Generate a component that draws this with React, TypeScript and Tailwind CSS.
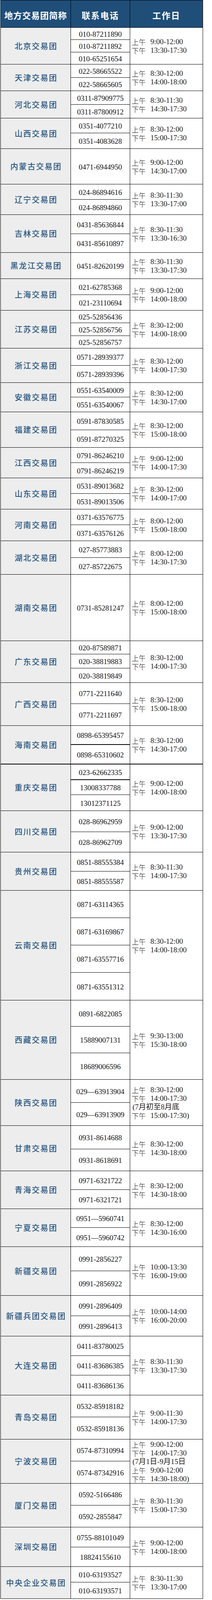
import * as React from "react";

type Group = {
  name: string;
  phones: string[];
  heights: number[];
  hours: string[];
  thickSplit?: number;
  thickBottom?: boolean;
};

const K = 4096 / 4570;
const HEADER = 79;

const std = (am: string, pm: string) => [`上午 ${am}`, `下午 ${pm}`];

const groups: Group[] = [
  { name: "北京交易团", phones: ["010-87211890", "010-87211892", "010-65251654"], heights: [35, 35, 35], hours: std("9:00-12:00", "13:30-17:30") },
  { name: "天津交易团", phones: ["022-58665522", "022-58665605"], heights: [38, 38], hours: std("8:30-12:00", "14:00-18:00") },
  { name: "河北交易团", phones: ["0311-87909775", "0311-87800912"], heights: [39, 39], hours: std("8:30-11:30", "14:30-17:30") },
  { name: "山西交易团", phones: ["0351-4077210", "0351-4083628"], heights: [43, 44], hours: std("8:30-12:00", "15:00-17:30") },
  { name: "内蒙古交易团", phones: ["0471-6944950"], heights: [102], hours: std("9:00-12:00", "14:30-17:00") },
  { name: "辽宁交易团", phones: ["024-86894616", "024-86894860"], heights: [43, 44], hours: std("8:30-11:30", "13:30-17:00") },
  { name: "吉林交易团", phones: ["0431-85636844", "0431-85610897"], heights: [54, 54], hours: std("8:30-11:30", "13:30-16:30") },
  { name: "黑龙江交易团", phones: ["0451-82620199"], heights: [75], hours: std("8:30-11:30", "13:30-17:30") },
  { name: "上海交易团", phones: ["021-62785368", "021-23110694"], heights: [45, 45], hours: std("9:00-12:00", "14:00-18:00") },
  { name: "江苏交易团", phones: ["025-52856436", "025-52856756", "025-52856757"], heights: [36, 36, 36], hours: std("8:30-12:00", "14:00-18:00") },
  { name: "浙江交易团", phones: ["0571-28939377", "0571-28939396"], heights: [49, 49], hours: std("8:30-12:00", "14:00-17:30") },
  { name: "安徽交易团", phones: ["0551-63540009", "0551-63540067"], heights: [42, 42], hours: std("8:30-12:00", "14:30-17:00") },
  { name: "福建交易团", phones: ["0591-87830585", "0591-87270325"], heights: [51, 51], hours: std("8:30-12:00", "15:00-18:00") },
  { name: "江西交易团", phones: ["0791-86246210", "0791-86246219"], heights: [43, 44], hours: std("9:00-12:00", "14:00-17:30") },
  { name: "山东交易团", phones: ["0531-89013682", "0531-89013506"], heights: [44, 45], hours: std("8:30-12:00", "14:00-17:00") },
  { name: "河南交易团", phones: ["0371-63576775", "0371-63576126"], heights: [45, 45], hours: std("8:00-12:00", "15:00-18:00") },
  { name: "湖北交易团", phones: ["027-85773883", "027-85722675"], heights: [48, 48], hours: std("8:00-12:00", "14:30-17:30") },
  { name: "湖南交易团", phones: ["0731-85281247"], heights: [190], hours: std("8:00-12:00", "15:00-18:00") },
  { name: "广东交易团", phones: ["020-87589871", "020-38819883", "020-38819849"], heights: [38, 40, 41], hours: std("8:30-12:00", "14:00-17:30") },
  { name: "广西交易团", phones: ["0771-2211640", "0771-2211697"], heights: [61, 62], hours: std("8:30-12:00", "15:00-18:00") },
  { name: "海南交易团", phones: ["0898-65395457", "0898-65310602"], heights: [55, 56], hours: std("8:30-12:00", "14:30-17:00"), thickSplit: 0, thickBottom: true },
  { name: "重庆交易团", phones: ["023-62662335", "13008337788", "13012371125"], heights: [44, 43, 45], hours: std("9:00-12:00", "14:00-18:00"), thickSplit: 0 },
  { name: "四川交易团", phones: ["028-86962959", "028-86962709"], heights: [60, 58], hours: std("9:00-12:00", "13:30-17:30") },
  { name: "贵州交易团", phones: ["0851-88555384", "0851-88555587"], heights: [55, 55], hours: std("8:30-11:30", "14:00-17:30") },
  { name: "云南交易团", phones: ["0871-63114365", "0871-63169867", "0871-63557716", "0871-63551312"], heights: [78, 78, 78, 79], hours: std("8:30-12:00", "14:00-18:00") },
  { name: "西藏交易团", phones: ["0891-6822085", "15889007131", "18689006596"], heights: [75, 76, 76], hours: std("9:30-13:00", "15:30-18:00") },
  {
    name: "陕西交易团",
    phones: ["029—63913904", "029—63913909"],
    heights: [66, 66],
    hours: ["上午 8:30-12:00", "下午 14:00-17:30", "(7月初至8月底", "下午 15:00-17:30)"],
  },
  { name: "甘肃交易团", phones: ["0931-8614688", "0931-8618691"], heights: [66, 63], hours: std("8:30-12:00", "14:30-18:00") },
  { name: "青海交易团", phones: ["0971-6321722", "0971-6321721"], heights: [54, 54], hours: std("8:30-12:00", "14:30-18:00") },
  { name: "宁夏交易团", phones: ["0951—5960741", "0951—5960742"], heights: [54, 54], hours: std("8:30-12:00", "14:30-16:00") },
  { name: "新疆交易团", phones: ["0991-2856227", "0991-2856922"], heights: [70, 70], hours: std("10:00-13:30", "16:00-19:00") },
  { name: "新疆兵团交易团", phones: ["0991-2896409", "0991-2896413"], heights: [58, 58], hours: std("10:00-14:00", "16:00-20:00") },
  { name: "大连交易团", phones: ["0411-83780025", "0411-83686385", "0411-83686136"], heights: [56, 56, 56], hours: std("8:30-11:30", "13:30-17:30") },
  { name: "青岛交易团", phones: ["0532-85918182", "0532-85918136"], heights: [63, 63], hours: std("9:00-11:30", "14:00-17:30") },
  {
    name: "宁波交易团",
    phones: ["0574-87310994", "0574-87342916"],
    heights: [63, 63],
    hours: ["上午 9:00-12:00", "下午 14:00-17:30", "(7月1日-9月15日", "上午 9:00-12:00", "下午 14:30-18:00)"],
  },
  { name: "厦门交易团", phones: ["0592-5166486", "0592-2855847"], heights: [63, 63], hours: std("8:30-11:30", "15:00-17:30") },
  { name: "深圳交易团", phones: ["0755-88101049", "18824155610"], heights: [56, 56], hours: std("9:00-12:00", "14:00-18:00") },
  { name: "中央企业交易团", phones: ["010-63193527", "010-63193571"], heights: [45, 47], hours: std("8:30-11:30", "13:30-17:00") },
];

// turn measured heights into squeezed ones, rounding on the running edge so nothing drifts
const scaled: number[][] = (() => {
  let y = HEADER;
  return groups.map((g) =>
    g.heights.map((h) => {
      const top = Math.round(y * K);
      y += h;
      return Math.round(y * K) - top;
    })
  );
})();

function HoursLine({ text }: { text: string }) {
  const m = text.match(/^(上午|下午) (.*)$/);
  if (!m) return <div className="pl-[2px]">{text}</div>;
  return (
    <div className="flex">
      <span className="inline-block w-[48px] font-['Noto_Sans_CJK_SC',sans-serif] text-[18px] font-light">{m[1]}</span>
      <span>{m[2]}</span>
    </div>
  );
}

function GroupRow({ g, heights }: { g: Group; heights: number[] }) {
  const total = heights.reduce((s, h) => s + h, 0);
  return (
    <div
      className={`grid grid-cols-[180px_152px_187px] overflow-hidden border-black ${g.thickBottom ? "border-b-2" : "border-b"}`}
      style={{ height: total }}
    >
      <div className="flex items-center justify-center border-r border-black bg-[#ededed] pl-[2px] font-['Noto_Sans_CJK_SC',sans-serif] text-[20px] font-medium leading-none tracking-[2px] text-[#285682]">
        {g.name}
      </div>
      <div className="flex flex-col border-r border-black">
        {g.phones.map((p, i) => {
          const last = i === g.phones.length - 1;
          return (
            <div
              key={p}
              className={`flex items-center justify-center pt-[2px] font-['Liberation_Serif','Noto_Sans_CJK_SC',serif] text-[19px] leading-none text-[#141414] ${
                last ? "flex-1" : g.thickSplit === i ? "border-b-2 border-black" : "border-b border-black"
              }`}
              style={last ? undefined : { height: heights[i] }}
            >
              {p}
            </div>
          );
        })}
      </div>
      <div className="flex flex-col justify-center border-r border-black pl-[4px] pt-[1px] font-['Liberation_Serif','Noto_Sans_CJK_SC',serif] text-[19px] leading-[22px] text-[#1a1a1a]">
        {g.hours.map((h, i) => (
          <HoursLine key={i} text={h} />
        ))}
      </div>
    </div>
  );
}

export default function App() {
  return (
    <div className="w-[544px] bg-white">
      <div className="ml-px w-[520px] border-l border-t border-black">
        <div className="grid h-[70px] grid-cols-[180px_152px_187px] border-b border-black bg-[#1f4e79] font-['Noto_Sans_CJK_SC',sans-serif] text-[22px] font-bold leading-none text-white">
          <div className="flex items-center justify-center border-r border-black pt-[4px] tracking-[1px]">地方交易团简称</div>
          <div className="flex items-center justify-center border-r border-black pt-[4px] tracking-[2px]">联系电话</div>
          <div className="flex items-center justify-center border-r border-black pt-[4px] tracking-[2px]">工作日</div>
        </div>
        {groups.map((g, i) => (
          <GroupRow key={g.name} g={g} heights={scaled[i]} />
        ))}
      </div>
    </div>
  );
}
